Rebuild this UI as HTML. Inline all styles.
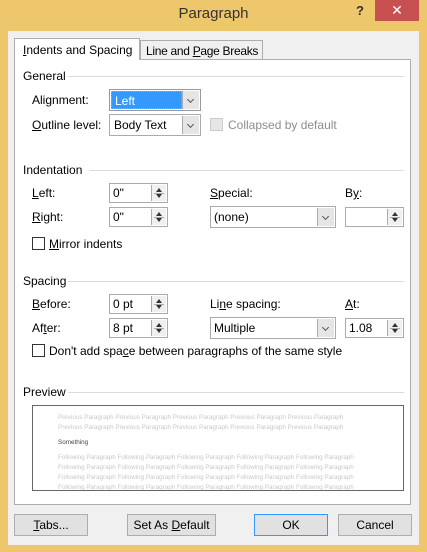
<!DOCTYPE html><html><head><style>
*{margin:0;padding:0;box-sizing:border-box}
body{width:427px;height:552px;background:#EEC66B;font-family:"Liberation Sans",sans-serif;font-size:12px;color:#000;position:relative;overflow:hidden}
.a{position:absolute;white-space:nowrap}
.client{position:absolute;left:8px;top:31px;width:411px;height:514px;background:#F0F0F0}
.panel{position:absolute;left:14px;top:59px;width:397px;height:446px;background:#fff;border:1px solid #ADADAD}
.line{position:absolute;height:1px;background:#DCDCDC}
.box{position:absolute;background:#fff;border:1px solid #ABABAB}
.dd{position:absolute;top:1px;right:1px;bottom:1px;width:17px;background:#E5E5E5;border-left:1px solid #ABABAB}
.dd:after{content:"";position:absolute;left:5px;top:6px;width:4px;height:4px;border-right:1.5px solid #555;border-bottom:1.5px solid #555;transform:rotate(45deg)}
.sp{position:absolute;top:1px;right:1px;bottom:1px;width:15px;border-left:1px solid #ABABAB;background:#F0F0F0}
.sp:before{content:"";position:absolute;left:4px;top:3px;border:3px solid transparent;border-bottom:4px solid #333;border-top:0}
.sp:after{content:"";position:absolute;left:4px;bottom:3px;border:3px solid transparent;border-top:4px solid #333;border-bottom:0}
.sp i{position:absolute;left:2px;right:2px;top:50%;height:1px;background:#ABABAB}
.cb{position:absolute;width:13px;height:13px;border:1px solid #333;background:#fff}
.btn{position:absolute;top:514px;height:22px;background:#E1E1E1;border:1px solid #ADADAD;text-align:center;line-height:20px}
.pv{position:absolute;left:25px;font-size:6.3px;color:#C8C8C8}
u{text-decoration:underline}
</style></head><body>
<div class="a" style="left:0;top:5px;width:427px;text-align:center;font-size:15px;color:#333">Paragraph</div>
<div class="a" style="left:356px;top:3px;font-weight:bold;font-size:13px;color:#333">?</div>
<div class="a" style="left:375px;top:0;width:44px;height:21px;background:#C75050;color:#fff;text-align:center;font-size:14px;line-height:21px">✕</div>
<div class="client"></div>
<div class="a" style="left:140px;top:40px;width:123px;height:20px;background:#F0F0F0;border:1px solid #ADADAD;padding:3px 0 0 5px;letter-spacing:-0.3px">Line and <u>P</u>age Breaks</div>
<div class="panel"></div>
<div class="a" style="left:14px;top:38px;width:126px;height:22px;background:#fff;border:1px solid #ADADAD;border-bottom:none;padding:4px 0 0 8px"><u>I</u>ndents and Spacing</div>

<div class="a" style="left:23px;top:69px">General</div><div class="line" style="left:68px;top:76px;width:336px"></div>
<div class="a" style="left:32px;top:93px">Ali<u>g</u>nment:</div>
<div class="box" style="left:109px;top:89px;width:92px;height:22px;border-color:#999"><div style="position:absolute;left:1px;top:1px;width:71px;height:18px;background:#3399FF;color:#fff;padding:2px 0 0 3px;border:1px dotted #E8A050">Left</div><div class="dd"></div></div>
<div class="a" style="left:32px;top:118px"><u>O</u>utline level:</div>
<div class="box" style="left:109px;top:114px;width:92px;height:22px"><div class="a" style="left:4px;top:3px">Body Text</div><div class="dd"></div></div>
<div class="cb" style="left:210px;top:118px;border-color:#CCC;background:#E6E6E6"></div>
<div class="a" style="left:228px;top:118px;color:#8D8D8D">Collapsed by default</div>

<div class="a" style="left:23px;top:163px">Indentation</div><div class="line" style="left:89px;top:170px;width:315px"></div>
<div class="a" style="left:32px;top:186px"><u>L</u>eft:</div>
<div class="box" style="left:109px;top:183px;width:59px;height:20px"><div class="a" style="left:3px;top:2px">0"</div><div class="sp"><i></i></div></div>
<div class="a" style="left:32px;top:210px"><u>R</u>ight:</div>
<div class="box" style="left:109px;top:207px;width:59px;height:20px"><div class="a" style="left:3px;top:2px">0"</div><div class="sp"><i></i></div></div>
<div class="a" style="left:210px;top:186px"><u>S</u>pecial:</div>
<div class="box" style="left:210px;top:206px;width:126px;height:22px"><div class="a" style="left:3px;top:3px">(none)</div><div class="dd"></div></div>
<div class="a" style="left:345px;top:186px">B<u>y</u>:</div>
<div class="box" style="left:345px;top:207px;width:59px;height:20px"><div class="sp"><i></i></div></div>
<div class="cb" style="left:32px;top:237px"></div>
<div class="a" style="left:49px;top:237px"><u>M</u>irror indents</div>

<div class="a" style="left:23px;top:274px">Spacing</div><div class="line" style="left:68px;top:281px;width:336px"></div>
<div class="a" style="left:32px;top:297px"><u>B</u>efore:</div>
<div class="box" style="left:109px;top:294px;width:59px;height:20px"><div class="a" style="left:3px;top:2px">0 pt</div><div class="sp"><i></i></div></div>
<div class="a" style="left:32px;top:321px">Af<u>t</u>er:</div>
<div class="box" style="left:109px;top:318px;width:59px;height:20px"><div class="a" style="left:3px;top:2px">8 pt</div><div class="sp"><i></i></div></div>
<div class="a" style="left:210px;top:297px">Li<u>n</u>e spacing:</div>
<div class="box" style="left:210px;top:317px;width:126px;height:22px"><div class="a" style="left:3px;top:3px">Multiple</div><div class="dd"></div></div>
<div class="a" style="left:345px;top:297px"><u>A</u>t:</div>
<div class="box" style="left:345px;top:318px;width:59px;height:20px"><div class="a" style="left:3px;top:2px">1.08</div><div class="sp"><i></i></div></div>
<div class="cb" style="left:32px;top:344px"></div>
<div class="a" style="left:49px;top:344px">Don't add spa<u>c</u>e between paragraphs of the same style</div>

<div class="a" style="left:23px;top:385px">Preview</div><div class="line" style="left:68px;top:392px;width:336px"></div>
<div class="a" style="left:32px;top:405px;width:372px;height:86px;border:1px solid #666;background:#fff;overflow:hidden">
<div class="pv" style="top:8px">Previous Paragraph Previous Paragraph Previous Paragraph Previous Paragraph Previous Paragraph</div>
<div class="pv" style="top:18px">Previous Paragraph Previous Paragraph Previous Paragraph Previous Paragraph Previous Paragraph</div>
<div class="pv" style="top:33px;color:#444">Something</div>
<div class="pv" style="top:48px">Following Paragraph Following Paragraph Following Paragraph Following Paragraph Following Paragraph</div>
<div class="pv" style="top:58px">Following Paragraph Following Paragraph Following Paragraph Following Paragraph Following Paragraph</div>
<div class="pv" style="top:68px">Following Paragraph Following Paragraph Following Paragraph Following Paragraph Following Paragraph</div>
<div class="pv" style="top:78px">Following Paragraph Following Paragraph Following Paragraph Following Paragraph Following Paragraph</div>
</div>

<div class="btn" style="left:14px;width:74px"><u>T</u>abs...</div>
<div class="btn" style="left:127px;width:89px">Set As <u>D</u>efault</div>
<div class="btn" style="left:254px;width:74px;border-color:#3399FF">OK</div>
<div class="btn" style="left:338px;width:74px">Cancel</div>
</body></html>
